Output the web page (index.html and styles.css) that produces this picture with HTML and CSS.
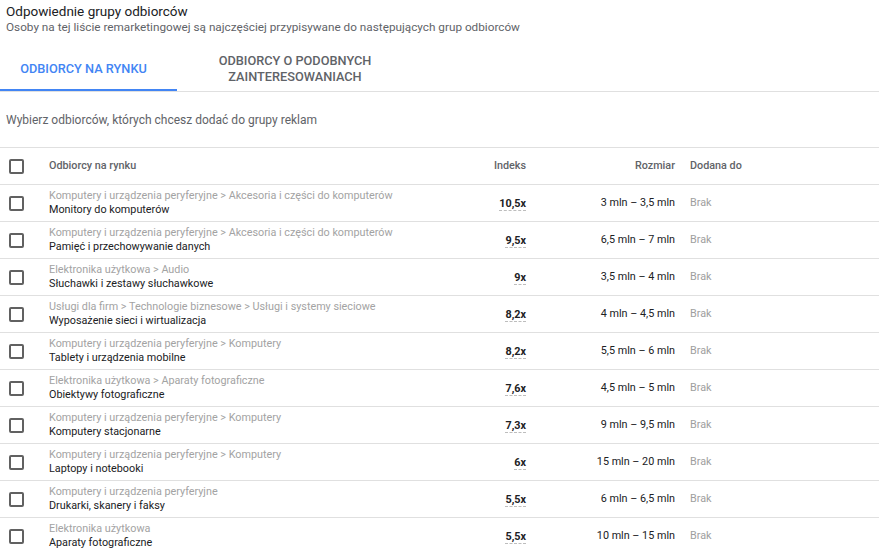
FILE: index.html
```html
<!DOCTYPE html>
<html lang="pl">
<head>
    <meta charset="UTF-8">
    <meta name="viewport" content="width=device-width, initial-scale=1.0">
    <title>Odpowiednie grupy odbiorców</title>
    <link rel="stylesheet" href="styles.css">
</head>
<body>
    <div class="intro">
        <div class="title">Odpowiednie grupy odbiorców</div>
        <div class="subtitle">Osoby na tej liście remarketingowej są najczęściej przypisywane do następujących grup odbiorców</div>
    </div>

    <div class="tabs">
        <div class="tab active">Odbiorcy na rynku</div>
        <div class="tab wide">Odbiorcy o podobnych zainteresowaniach</div>
    </div>

    <div class="hint">Wybierz odbiorców, których chcesz dodać do grupy reklam</div>

    <div class="table">
        <div class="row head">
            <div class="cell"><span class="checkbox"></span></div>
            <div class="cell">Odbiorcy na rynku</div>
            <div class="cell num">Indeks</div>
            <div class="cell num">Rozmiar</div>
            <div class="cell added">Dodana do</div>
        </div>

        <div class="row">
            <div class="cell"><span class="checkbox"></span></div>
            <div class="cell">
                <div class="path">Komputery i urządzenia peryferyjne &gt; Akcesoria i części do komputerów</div>
                <div class="name">Monitory do komputerów</div>
            </div>
            <div class="cell num"><span class="index">10,5x</span></div>
            <div class="cell num">3 mln – 3,5 mln</div>
            <div class="cell added none">Brak</div>
        </div>

        <div class="row">
            <div class="cell"><span class="checkbox"></span></div>
            <div class="cell">
                <div class="path">Komputery i urządzenia peryferyjne &gt; Akcesoria i części do komputerów</div>
                <div class="name">Pamięć i przechowywanie danych</div>
            </div>
            <div class="cell num"><span class="index">9,5x</span></div>
            <div class="cell num">6,5 mln – 7 mln</div>
            <div class="cell added none">Brak</div>
        </div>

        <div class="row">
            <div class="cell"><span class="checkbox"></span></div>
            <div class="cell">
                <div class="path">Elektronika użytkowa &gt; Audio</div>
                <div class="name">Słuchawki i zestawy słuchawkowe</div>
            </div>
            <div class="cell num"><span class="index">9x</span></div>
            <div class="cell num">3,5 mln – 4 mln</div>
            <div class="cell added none">Brak</div>
        </div>

        <div class="row">
            <div class="cell"><span class="checkbox"></span></div>
            <div class="cell">
                <div class="path">Usługi dla firm &gt; Technologie biznesowe &gt; Usługi i systemy sieciowe</div>
                <div class="name">Wyposażenie sieci i wirtualizacja</div>
            </div>
            <div class="cell num"><span class="index">8,2x</span></div>
            <div class="cell num">4 mln – 4,5 mln</div>
            <div class="cell added none">Brak</div>
        </div>

        <div class="row">
            <div class="cell"><span class="checkbox"></span></div>
            <div class="cell">
                <div class="path">Komputery i urządzenia peryferyjne &gt; Komputery</div>
                <div class="name">Tablety i urządzenia mobilne</div>
            </div>
            <div class="cell num"><span class="index">8,2x</span></div>
            <div class="cell num">5,5 mln – 6 mln</div>
            <div class="cell added none">Brak</div>
        </div>

        <div class="row">
            <div class="cell"><span class="checkbox"></span></div>
            <div class="cell">
                <div class="path">Elektronika użytkowa &gt; Aparaty fotograficzne</div>
                <div class="name">Obiektywy fotograficzne</div>
            </div>
            <div class="cell num"><span class="index">7,6x</span></div>
            <div class="cell num">4,5 mln – 5 mln</div>
            <div class="cell added none">Brak</div>
        </div>

        <div class="row">
            <div class="cell"><span class="checkbox"></span></div>
            <div class="cell">
                <div class="path">Komputery i urządzenia peryferyjne &gt; Komputery</div>
                <div class="name">Komputery stacjonarne</div>
            </div>
            <div class="cell num"><span class="index">7,3x</span></div>
            <div class="cell num">9 mln – 9,5 mln</div>
            <div class="cell added none">Brak</div>
        </div>

        <div class="row">
            <div class="cell"><span class="checkbox"></span></div>
            <div class="cell">
                <div class="path">Komputery i urządzenia peryferyjne &gt; Komputery</div>
                <div class="name">Laptopy i notebooki</div>
            </div>
            <div class="cell num"><span class="index">6x</span></div>
            <div class="cell num">15 mln – 20 mln</div>
            <div class="cell added none">Brak</div>
        </div>

        <div class="row">
            <div class="cell"><span class="checkbox"></span></div>
            <div class="cell">
                <div class="path">Komputery i urządzenia peryferyjne</div>
                <div class="name">Drukarki, skanery i faksy</div>
            </div>
            <div class="cell num"><span class="index">5,5x</span></div>
            <div class="cell num">6 mln – 6,5 mln</div>
            <div class="cell added none">Brak</div>
        </div>

        <div class="row">
            <div class="cell"><span class="checkbox"></span></div>
            <div class="cell">
                <div class="path">Elektronika użytkowa</div>
                <div class="name">Aparaty fotograficzne</div>
            </div>
            <div class="cell num"><span class="index">5,5x</span></div>
            <div class="cell num">10 mln – 15 mln</div>
            <div class="cell added none">Brak</div>
        </div>
    </div>
</body>
</html>
```

FILE: styles.css
```css
body {
    margin: 0;
    font-family: Roboto, "Liberation Sans", Arial, sans-serif;
    color: #202124;
    background: #fff;
    overflow: hidden;
}
.intro {
    padding: 3px 6px 0;
}
.title {
    font-size: 13.5px;
    line-height: 17px;
}
.subtitle {
    font-size: 11.75px;
    line-height: 14px;
    color: #5f6368;
}
.tabs {
    display: flex;
    margin-top: 12px;
    border-bottom: 1px solid #e0e0e0;
}
.tab {
    box-sizing: border-box;
    height: 45px;
    padding: 2px 20px 0;
    display: flex;
    align-items: center;
    justify-content: center;
    text-align: center;
    font-size: 12.75px;
    line-height: 16px;
    font-weight: 500;
    text-transform: uppercase;
    color: #5f6368;
    border-bottom: 2px solid transparent;
}
.tab.active {
    width: 177px;
    padding: 2px 28px 0 18px;
    color: #4285f4;
    border-bottom-color: #4285f4;
}
.tab.wide {
    width: 236px;
}
.hint {
    height: 55px;
    display: flex;
    align-items: center;
    padding-left: 6px;
    font-size: 12px;
    color: #5f6368;
}
.table {
    border-top: 1px solid #e0e0e0;
}
.row {
    display: grid;
    grid-template-columns: 49px 387px 90px 149px 204px;
    height: 36px;
    border-bottom: 1px solid #e0e0e0;
    font-size: 10.8px;
    line-height: 14px;
}
.cell {
    display: flex;
    flex-direction: column;
    justify-content: center;
}
.cell.num {
    align-items: flex-end;
}
.cell.added {
    padding-left: 15px;
}
.head {
    color: #5f6368;
    font-weight: 500;
}
.checkbox {
    box-sizing: border-box;
    width: 15px;
    height: 15px;
    margin-left: 9px;
    border: 2px solid #616161;
    border-radius: 2px;
}
.path {
    color: #a3a3a3;
}
.name {
    color: #202124;
}
.index {
    font-weight: 700;
    line-height: 13px;
    border-bottom: 1px dashed #bdbdbd;
    margin-top: 2px;
}
.none {
    color: #9e9e9e;
}
```
